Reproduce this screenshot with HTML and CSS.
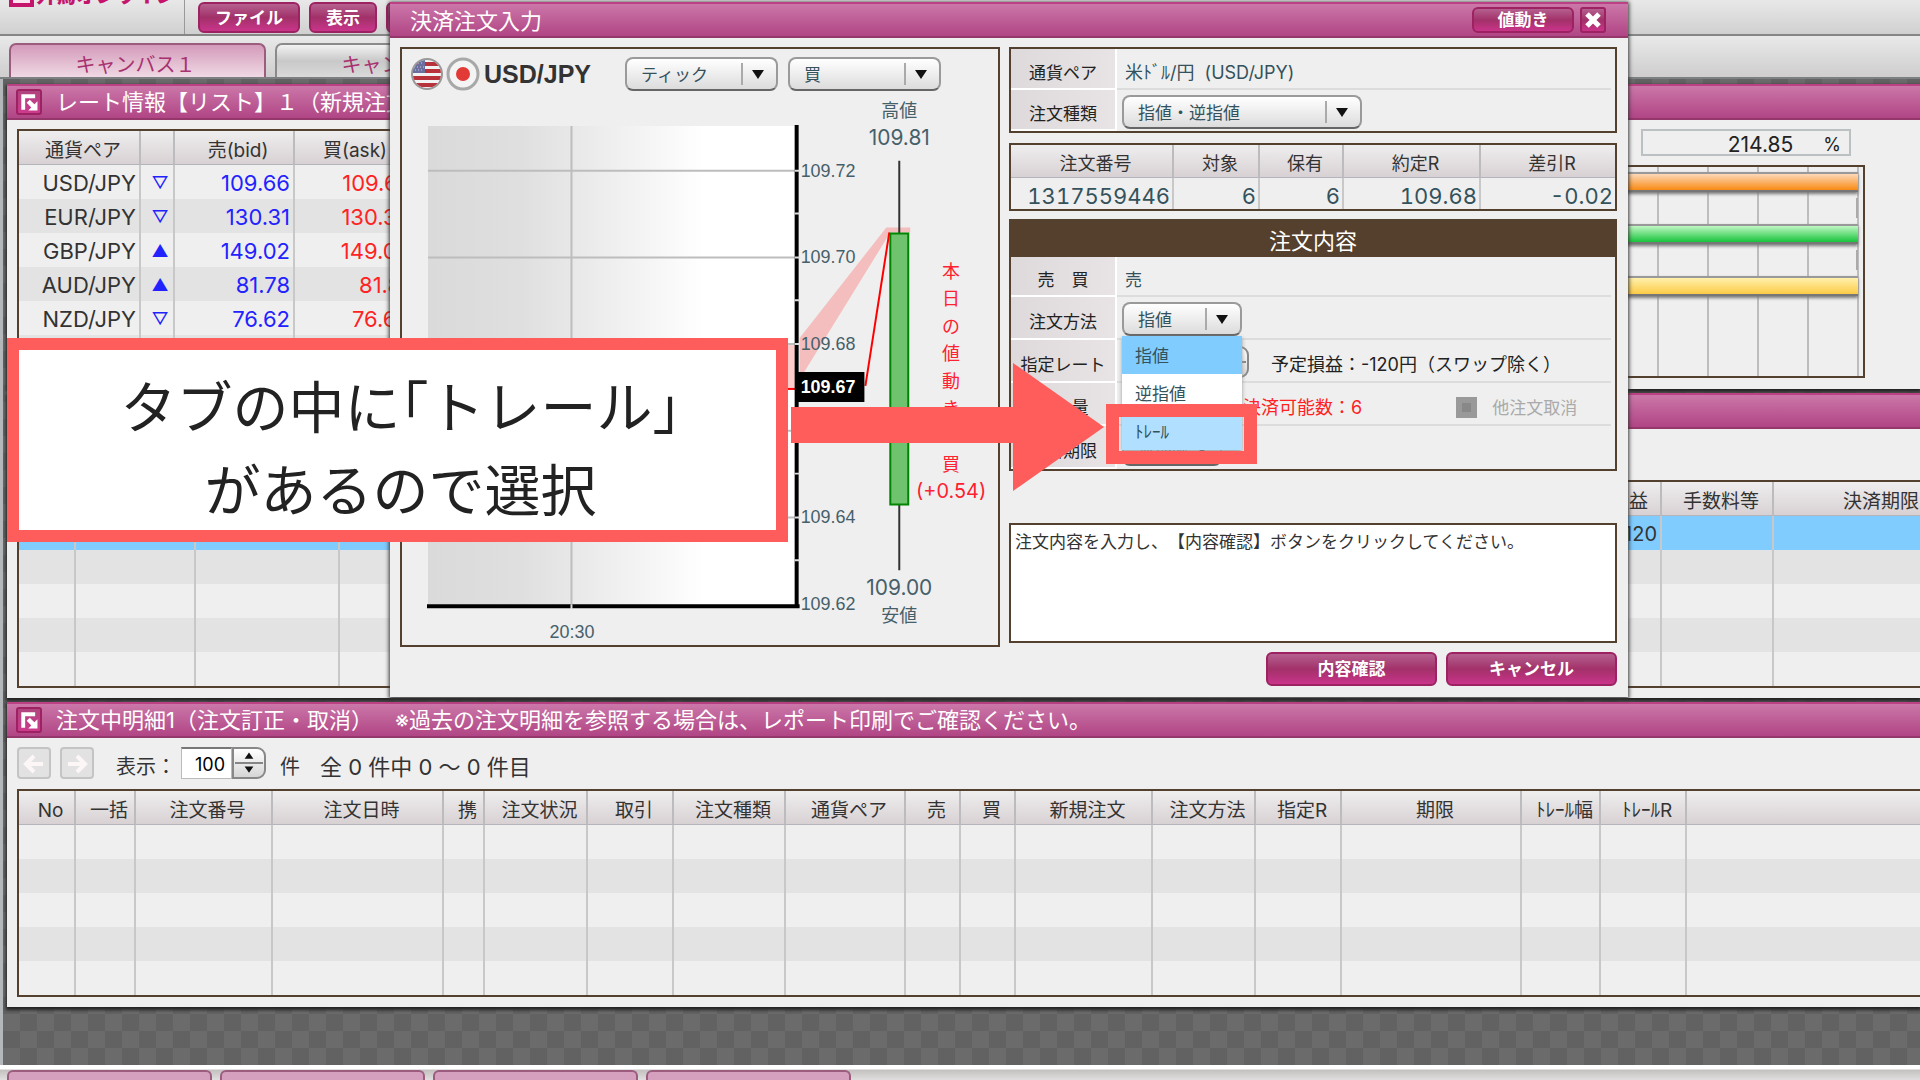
FILE: index.html
```html
<!DOCTYPE html>
<html lang="ja">
<head>
<meta charset="utf-8">
<title>決済注文入力</title>
<link rel="stylesheet" href="styles.css">
</head>
<body>
<header class="topbar">
  <div class="brand"><span class="brand-mark"></span>外為オンライン</div>
  <nav class="menu">
    <button class="btn menu-file">ファイル</button>
    <button class="btn">表示</button>
    <button class="btn" aria-label="設定"></button>
  </nav>
</header>
<nav class="canvas-tabs">
  <a class="canvas-tab active" href="#c1">キャンバス１</a>
  <a class="canvas-tab" href="#c2">キャンバス２</a>
</nav>

<main class="workspace">
  <div class="row-split">
    <section class="window">
      <h2 class="titlebar">
        <svg class="win-icon" viewBox="0 0 26 26"><path d="M3 23V3h18v5H8v15z" fill="#fff"/><path d="M24 12v12H12l4-4-6-6 4-4 6 6z" fill="#fff"/></svg>
        レート情報【リスト】１（新規注文）
      </h2>
      <div class="window-body">
        <table class="grid rates">
          <thead><tr><th>通貨ペア</th><th></th><th>売(bid)</th><th>買(ask)</th><th></th></tr></thead>
          <tbody>
            <tr><td>USD/JPY</td><td class="dir">▽</td><td class="bid">109.66</td><td class="ask">109.67</td><td></td></tr>
            <tr><td>EUR/JPY</td><td class="dir">▽</td><td class="bid">130.31</td><td class="ask">130.32</td><td></td></tr>
            <tr><td>GBP/JPY</td><td class="dir">▲</td><td class="bid">149.02</td><td class="ask">149.05</td><td></td></tr>
            <tr><td>AUD/JPY</td><td class="dir">▲</td><td class="bid">81.78</td><td class="ask">81.81</td><td></td></tr>
            <tr><td>NZD/JPY</td><td class="dir">▽</td><td class="bid">76.62</td><td class="ask">76.68</td><td></td></tr>
            <tr><td></td><td></td><td></td><td></td><td></td></tr>
          </tbody>
        </table>
      </div>
    </section>
    <section class="window">
      <div class="titlebar"></div>
      <div class="window-body account">
        <div class="ratio"><span>214.85</span><span class="percent">%</span></div>
        <div class="bars">
          <div class="bar orange"></div>
          <div class="bar-tick"></div>
          <div class="bar green"></div>
          <div class="bar-tick"></div>
          <div class="bar yellow"></div>
        </div>
      </div>
    </section>
  </div>

  <section class="window">
    <div class="titlebar"></div>
    <div class="window-body">
      <div class="toolbar"></div>
      <table class="grid positions">
        <thead><tr><th></th><th></th><th></th><th></th><th>評価損益</th><th>手数料等</th><th>決済期限</th></tr></thead>
        <tbody>
          <tr class="selected"><td></td><td></td><td></td><td></td><td>-120</td><td></td><td></td></tr>
          <tr><td></td><td></td><td></td><td></td><td></td><td></td><td></td></tr>
          <tr><td></td><td></td><td></td><td></td><td></td><td></td><td></td></tr>
          <tr><td></td><td></td><td></td><td></td><td></td><td></td><td></td></tr>
          <tr><td></td><td></td><td></td><td></td><td></td><td></td><td></td></tr>
        </tbody>
      </table>
    </div>
  </section>

  <section class="window">
    <h2 class="titlebar">
      <svg class="win-icon" viewBox="0 0 26 26"><path d="M3 23V3h18v5H8v15z" fill="#fff"/><path d="M24 12v12H12l4-4-6-6 4-4 6 6z" fill="#fff"/></svg>
      注文中明細1（注文訂正・取消）　※過去の注文明細を参照する場合は、レポート印刷でご確認ください。
    </h2>
    <div class="window-body">
      <div class="toolbar">
        <button class="page-btn" aria-label="前へ"><svg viewBox="0 0 24 24"><path d="M21 12H5M12 4l-8 8 8 8" fill="none" stroke="#fdf6f6" stroke-width="4"/></svg></button>
        <button class="page-btn" aria-label="次へ"><svg viewBox="0 0 24 24"><path d="M3 12h16M12 4l8 8-8 8" fill="none" stroke="#fdf6f6" stroke-width="4"/></svg></button>
        <label for="count">表示：</label>
        <span class="spinner"><input id="count" type="text" value="100"><button aria-label="増減"><svg viewBox="0 0 32 32"><path d="M16 4l5 7H11zM16 27l5-7H11z" fill="#111"/><path d="M0 16h32" stroke="#777" stroke-width="2"/></svg></button></span>
        <span class="unit">件</span>
        <span class="total">全 0 件中 0 ～ 0 件目</span>
      </div>
      <table class="grid orders">
        <thead><tr><th>No</th><th>一括</th><th>注文番号</th><th>注文日時</th><th>携</th><th>注文状況</th><th>取引</th><th>注文種類</th><th>通貨ペア</th><th>売</th><th>買</th><th>新規注文</th><th>注文方法</th><th>指定R</th><th>期限</th><th>ﾄﾚｰﾙ幅</th><th>ﾄﾚｰﾙR</th><th></th></tr></thead>
        <tbody>
          <tr><td></td><td></td><td></td><td></td><td></td><td></td><td></td><td></td><td></td><td></td><td></td><td></td><td></td><td></td><td></td><td></td><td></td><td></td></tr>
          <tr><td></td><td></td><td></td><td></td><td></td><td></td><td></td><td></td><td></td><td></td><td></td><td></td><td></td><td></td><td></td><td></td><td></td><td></td></tr>
          <tr><td></td><td></td><td></td><td></td><td></td><td></td><td></td><td></td><td></td><td></td><td></td><td></td><td></td><td></td><td></td><td></td><td></td><td></td></tr>
          <tr><td></td><td></td><td></td><td></td><td></td><td></td><td></td><td></td><td></td><td></td><td></td><td></td><td></td><td></td><td></td><td></td><td></td><td></td></tr>
          <tr><td></td><td></td><td></td><td></td><td></td><td></td><td></td><td></td><td></td><td></td><td></td><td></td><td></td><td></td><td></td><td></td><td></td><td></td></tr>
        </tbody>
      </table>
    </div>
  </section>
</main>
<footer class="taskbar"><i></i><i></i><i></i><i></i></footer>

<div class="dialog" role="dialog" aria-labelledby="dlg-title">
  <div class="titlebar dialog-title">
    <h1 id="dlg-title">決済注文入力</h1>
    <button class="btn move-btn">値動き</button>
    <button class="btn close-btn" aria-label="閉じる"><svg viewBox="0 0 16 16"><path d="M2 2l12 12M14 2L2 14" stroke="#fff" stroke-width="5"/></svg></button>
  </div>
  <div class="dialog-body">
    <div class="panel chart-panel">
      <div class="chart-head">
        <svg class="flags" viewBox="0 0 70 34">
          <defs><clipPath id="us"><circle cx="17" cy="17" r="14"/></clipPath></defs>
          <circle cx="17" cy="17" r="16" fill="#999"/>
          <g clip-path="url(#us)"><path fill="#f2f2f2" d="M0 0h34v34H0z"/><path d="M0 7h34M0 14h34M0 21h34M0 28h34" stroke="#b8323c" stroke-width="4"/><path fill="#6a6fa0" d="M0 0h15v16H0z"/><path d="M5 6h9M4 10h10M5 13h9" stroke="#c8cade" stroke-width="1" stroke-dasharray="1 2"/></g>
          <circle cx="53" cy="17" r="15" fill="#f4f4f4" stroke="#a8a8a8" stroke-width="3"/><circle cx="53" cy="17" r="7" fill="#e23a36"/>
        </svg>
        <strong class="pair">USD/JPY</strong>
        <select class="select w153" aria-label="足種"><option>ティック</option></select>
        <select class="select w153" aria-label="売買"><option>買</option></select>
      </div>
      <svg class="chart" viewBox="401 96 598 549">
        <defs><linearGradient id="fade"><stop offset="0" stop-color="#dadada"/><stop offset=".25" stop-color="#dfdfdf"/><stop offset=".55" stop-color="#f2f2f2"/><stop offset=".75" stop-color="#fff"/></linearGradient></defs>
        <path fill="url(#fade)" d="M427 125h370v480H427z"/>
        <path d="M427 170h370M427 257h370M427 344h370M427 431h370M427 518h370M571 125v480" stroke="#bdbdbd" stroke-width="2" fill="none"/>
        <path fill="#fcc" d="M780 345h17v43h-17z"/>
        <path d="M780 389h17" stroke="#f00" stroke-width="2"/>
        <path d="M797 124v484M426 607h374" stroke="#000" stroke-width="4"/>
        <path d="M795 170h5M795 213h5M795 257h5M795 300h5M795 344h5M795 474h5M795 518h5M795 561h5M571 605v5" stroke="#ddd" stroke-width="2"/>
        <path fill="#f4bebe" d="M887 227h24v5h-20l-87 141h-4v-35z"/>
        <path d="M890 232L866 386" stroke="#f00" stroke-width="2"/>
        <path d="M900 160v411" stroke="#333" stroke-width="2"/>
        <path d="M891 233h18v272h-18z" fill="#6fc36f" stroke="#008500" stroke-width="2"/>
        <g class="axis"><text x="801" y="176">109.72</text><text x="801" y="263">109.70</text><text x="801" y="350">109.68</text><text x="801" y="524">109.64</text><text x="801" y="611">109.62</text><text x="549" y="639">20:30</text></g>
        <path d="M796 372h69v30h-69z"/><text class="now" x="801" y="393">109.67</text>
        <g class="extreme"><text x="900" y="116">高値</text><text class="num" x="900" y="144">109.81</text><text class="num" x="900" y="596">109.00</text><text x="900" y="623">安値</text></g>
        <g class="move"><text x="952" y="278">本</text><text x="952" y="305">日</text><text x="952" y="333">の</text><text x="952" y="360">値</text><text x="952" y="388">動</text><text x="952" y="415">き</text><text x="952" y="471">買</text><text class="num" x="952" y="498">(+0.54)</text></g>
      </svg>
    </div>
    <div class="order-column">
      <div class="panel form">
        <div class="field"><span class="label">通貨ペア</span><span class="value pair-name">米ﾄﾞﾙ/円&nbsp; (USD/JPY)</span></div>
        <div class="field"><label class="label" for="kind">注文種類</label><span class="value"><select class="select w240" id="kind"><option>指値・逆指値</option></select></span></div>
      </div>
      <table class="panel grid summary">
        <thead><tr><th>注文番号</th><th>対象</th><th>保有</th><th>約定R</th><th>差引R</th></tr></thead>
        <tbody><tr><td>1317559446</td><td>6</td><td>6</td><td>109.68</td><td>-0.02</td></tr></tbody>
      </table>
      <section class="panel form content">
        <h2>注文内容</h2>
        <div class="field first"><span class="label">売　買</span><span class="value">売</span></div>
        <div class="field"><label class="label" for="method">注文方法</label><span class="value combo">
          <select class="select w120" id="method"><option>指値</option></select>
          <ul class="options"><li class="current">指値</li><li>逆指値</li><li class="hover">ﾄﾚｰﾙ</li></ul>
        </span></div>
        <div class="field"><label class="label" for="rate">指定レート</label><span class="value"><span class="spinner rate"><input id="rate" type="text"><button aria-label="レート増減"><svg viewBox="0 0 32 32"><path d="M0 16h32" stroke="#777" stroke-width="2"/></svg></button></span><span class="profit">予定損益：-120円（スワップ除く）</span></span></div>
        <div class="field"><span class="label">数　量</span><span class="value"><span class="limit">決済可能数：6</span><label class="cancel"><input type="checkbox" disabled>他注文取消</label></span></div>
        <div class="field"><label class="label" for="expiry">決済期限</label><span class="value"><select class="select w100" id="expiry"><option>無期限</option></select></span></div>
      </section>
      <p class="message">注文内容を入力し、【内容確認】ボタンをクリックしてください。</p>
      <div class="actions"><button class="btn">内容確認</button><button class="btn">キャンセル</button></div>
    </div>
  </div>
</div>

<svg class="arrow" viewBox="0 0 314 128"><path d="M0 44h222V0l91 64-91 64V80H0z" fill="#ff5c5c"/></svg>
<div class="highlight"></div>
<p class="callout">タブの中に「トレール」<br>があるので選択</p>
</body>
</html>
```
FILE: styles.css
```css
* { box-sizing: border-box; }

body {
  margin: 0;
  height: 100vh;
  display: flex;
  flex-direction: column;
  position: relative;
  overflow: hidden;
  background: #e4e4e4;
  color: #333;
  font: 18px/24px Inter, "Noto Sans CJK JP", sans-serif;
  text-spacing-trim: space-all;
}
h1, h2, p, ul { margin: 0; padding: 0; font-weight: 400; }
button, input, select { font: inherit; }

/* top menu */
.topbar {
  flex: none;
  display: flex;
  height: 36px;
  background: linear-gradient(#e8e8e8, #d0d0d0);
  border-bottom: 2px solid #868686;
}
.brand {
  flex: none;
  width: 185px;
  padding-left: 9px;
  display: flex;
  gap: 2px;
  line-height: 28px;
  margin-top: -18px;
  height: 52px;
  font-size: 20px;
  font-weight: 900;
  color: #c4146c;
  white-space: nowrap;
  overflow: hidden;
  border-right: 1px solid #999;
}
.brand-mark { width: 25px; height: 25px; border: 4px solid #c4146c; background: #fbe4ef; flex: none; }
.menu { display: flex; gap: 9px; padding: 2px 0 1px 13px; }
.btn {
  min-width: 68px;
  padding: 0;
  border: 2px solid #9c2262;
  border-radius: 6px;
  background: linear-gradient(#b5608f, #a23169 50%, #c9348a);
  color: #fff;
  font-size: 17px;
  font-weight: 700;
}
.menu-file { width: 102px; }

/* canvas tabs */
.canvas-tabs {
  flex: none;
  display: flex;
  gap: 9px;
  height: 43px;
  padding: 7px 0 0 9px;
  background: linear-gradient(#e9e9e9, #cfcdcd);
  border-bottom: 2px solid #7c8083;
}
.canvas-tab {
  width: 257px;
  padding: 8px 4px 0 0;
  border: 2px solid #8a8a8a;
  border-bottom: 0;
  border-radius: 7px 7px 0 0;
  background: linear-gradient(#f2f2f2, #c8c8c8 50%, #dadada);
  color: #a8326f;
  font-size: 20px;
  text-align: center;
  text-decoration: none;
}
.canvas-tab.active { border-color: #9b5c7e; background: linear-gradient(#d49aba, #efd9e4); }

/* workspace */
.workspace {
  flex: 1;
  min-height: 0;
  display: flex;
  flex-direction: column;
  gap: 4px;
  padding: 5px 0 0 4px;
  border-left: 3px solid #b4b8ba;
  background: repeating-conic-gradient(#6b6b6b 0 25%, #626262 0 50%) 0 0 / 34px 34px;
}
.row-split { display: grid; grid-template-columns: 820px 1fr; gap: 4px; }
.window {
  height: 305px;
  background: #efefef;
  box-shadow: 0 2px 3px 1px #222;
  overflow: hidden;
}
.titlebar {
  display: flex;
  align-items: center;
  gap: 14px;
  height: 36px;
  padding: 0 9px;
  border-top: 2px solid #bb4184;
  border-bottom: 2px solid #94386b;
  background: linear-gradient(#cb77a9, #b14585);
  color: #fff;
  font-size: 22px;
  white-space: nowrap;
}
.win-icon { width: 26px; height: 26px; padding: 1px; border: 2px solid #9c2262; border-radius: 3px; background: linear-gradient(#b0457f, #cc3a8d); flex: none; }
.window-body { padding: 9px 0 10px 10px; overflow: hidden; }
.toolbar { display: flex; align-items: center; height: 32px; margin-bottom: 10px; font-size: 20px; }
.page-btn { width: 34px; height: 32px; margin-right: 9px; padding: 3px; border: 2px solid #c4c4c4; border-radius: 4px; background: #e2e2e2; }
.page-btn svg { display: block; width: 24px; height: 24px; }
.toolbar label { margin: 0 5px 0 13px; padding-top: 8px; }
.unit { margin: 0 20px 0 14px; padding-top: 8px; }
.total { padding-top: 8px; font-size: 22px; }
.spinner { display: flex; height: 32px; }
.spinner input { width: 51px; padding: 3px 6px 0; border: 1px solid #bbb; border-top: 2px solid #777; background: #fff; text-align: right; font-size: 18px; }
.spinner button { width: 34px; padding: 0; border: 2px solid #888; border-radius: 0 9px 9px 0; background: linear-gradient(#fff, #d6d6d6); }
.spinner svg { display: block; width: 100%; height: 28px; }

/* data grids */
.grid {
  width: 100%;
  table-layout: fixed;
  border-collapse: separate;
  border-spacing: 0;
  border: 2px solid #54402e;
  border-right: 0;
  color: #333;
}
.grid th {
  height: 34px;
  padding: 6px 0 0 8px;
  font-size: 19px;
  font-weight: 400;
  white-space: nowrap;
  background: linear-gradient(#efeeee, #d8d1d4);
  border-right: 2px solid #bcbcbf;
  border-bottom: 1px solid #b4b4bc;
}
.grid td { height: 34px; padding: 2px 3px 0 0; border-right: 2px solid #c8c8c8; text-align: right; font-size: 22px; line-height: 24px; }
.grid tbody tr:nth-child(even) { background: #e3e3e3; }
.grid th:last-child, .grid td:last-child { border-right: 0; }
.grid .selected { background: #80ccff; }
.grid .dir { color: #22f; text-align: center; padding: 2px 0 0 6px; font-size: 17px; }
.grid .bid { color: #22f; }
.grid .ask { color: #f22; }
.rates th:nth-child(1) { width: 122px; }
.rates th:nth-child(2) { width: 34px; }
.rates th:nth-child(3), .rates th:nth-child(4) { width: 120px; }
.rates th:nth-child(4) { padding-left: 2px; }
.positions { width: calc(100% + 60px); }
.positions th:nth-child(1) { width: 57px; }
.positions th:nth-child(2) { width: 120px; }
.positions th:nth-child(3) { width: 144px; }
.positions th:nth-child(5) { width: 110px; }
.positions th:nth-child(6) { width: 112px; }
.positions th:nth-child(7) { width: 206px; }
.positions td { font-size: 20px; }
.orders th:nth-child(1) { width: 57px; }
.orders th:nth-child(2) { width: 60px; }
.orders th:nth-child(3) { width: 137px; }
.orders th:nth-child(4) { width: 171px; }
.orders th:nth-child(5) { width: 41px; }
.orders th:nth-child(6) { width: 103px; }
.orders th:nth-child(7) { width: 86px; }
.orders th:nth-child(8) { width: 112px; }
.orders th:nth-child(9) { width: 120px; }
.orders th:nth-child(10), .orders th:nth-child(11) { width: 55px; }
.orders th:nth-child(12) { width: 137px; }
.orders th:nth-child(13) { width: 103px; }
.orders th:nth-child(14) { width: 86px; }
.orders th:nth-child(15) { width: 180px; }
.orders th:nth-child(16) { width: 79px; }
.orders th:nth-child(17) { width: 86px; }

/* account ratio */
.account { display: flex; flex-direction: column; align-items: flex-end; padding-right: 55px; }
.ratio { display: flex; justify-content: flex-end; gap: 30px; width: 210px; height: 27px; margin-right: 14px; padding: 2px 8px 0 0; border: 2px solid #bbc0c2; color: #222; font-size: 21px; }
.percent { font-size: 18px; }
.bars {
  width: 100%;
  height: 213px;
  margin-top: 9px;
  padding: 5px 5px 0 0;
  border: 2px solid #54402e;
  background: repeating-linear-gradient(to left, transparent 0 4px, #bdbdbd 4px 6px, transparent 6px 50px);
}
.bar { height: 20px; border-top: 2px solid #999; border-bottom: 2px solid #777; box-shadow: 0 2px 3px #777; }
.orange { background: linear-gradient(#fdd9b8, #f88a14); }
.green { background: linear-gradient(#c0f7c4, #17c43c); }
.yellow { background: linear-gradient(#fff0ac, #fccb46); }
.bar-tick { width: 2px; height: 20px; margin: 6px 0 6px auto; background: #aaa; }

.taskbar { flex: none; display: flex; gap: 8px; height: 15px; padding: 5px 0 0 7px; background: linear-gradient(#fff 4px, #c4c0c0 5px, #e0dede); }
.taskbar i { width: 205px; border: 2px solid #9b5c7e; border-bottom: 0; border-radius: 6px 6px 0 0; background: #d5a0be; }

/* order dialog */
.dialog { position: absolute; left: 390px; top: 2px; width: 1238px; background: #efefef; box-shadow: 0 1px 4px 1px #333; color: #34525c; font-size: 17px; }
.dialog-title { padding: 0 22px 0 20px; gap: 6px; }
.dialog-title h1 { flex: 1; font-size: 22px; padding-top: 2px; }
.dialog-title .btn { height: 26px; line-height: 22px; }
.dialog-title .move-btn { width: 102px; }
.dialog-title .close-btn { min-width: 0; width: 26px; border-radius: 3px; }
.close-btn svg { display: block; width: 16px; height: 16px; margin: auto; }
.dialog-body { display: flex; gap: 9px; padding: 9px 11px 11px 10px; }
.panel { border: 2px solid #54402e; }
.chart-panel { width: 600px; height: 600px; }
.chart-head { display: flex; align-items: center; height: 34px; margin-top: 8px; padding-left: 8px; }
.flags { width: 70px; height: 34px; margin-right: 4px; }
.pair { width: 141px; font: 700 25px/34px "Liberation Sans", sans-serif; color: #333; }
.chart-head .select + .select { margin-left: 10px; }
.chart { display: block; width: 596px; height: 547px; margin-top: 6px; }
.chart text { fill: #46606a; }
.chart .axis text { font: 18px "Liberation Sans", sans-serif; }
.chart .now { font: 700 18px "Liberation Sans", sans-serif; fill: #fff; }
.chart .extreme text, .chart .move text { font-size: 18px; text-anchor: middle; }
.chart .extreme .num { font-size: 21px; }
.chart .move .num { font-size: 20px; }
.chart .move text { fill: #ff2030; }

.select {
  appearance: none;
  height: 34px;
  padding: 2px 36px 0 14px;
  border: 2px solid #9a9a9a;
  border-bottom-color: #666;
  border-radius: 8px;
  background: url("data:image/svg+xml,%3Csvg xmlns='http://www.w3.org/2000/svg' width='36' height='30'%3E%3Cpath d='M2 4v22' stroke='%23aaa' stroke-width='2'/%3E%3Cpath d='M12 11h12l-6 9z' fill='%23111'/%3E%3C/svg%3E") right center no-repeat, linear-gradient(#fff, #dcdcdc);
  color: #34525c;
}
.w153 { width: 153px; }
.w240 { width: 240px; }
.w120 { width: 120px; }
.w100 { width: 100px; }

.order-column { width: 608px; display: flex; flex-direction: column; }
.field { display: flex; height: 43px; }
.field.first { height: 40px; }
.form:not(.content) .field { height: 41px; }
.label { width: 106px; flex: none; display: flex; align-items: center; justify-content: center; padding-top: 8px; color: #222; background: linear-gradient(to right, #ded9da, #e8e3e4); border-right: 2px solid #fff; border-bottom: 2px solid #fff; }
.value { flex: 1; display: flex; align-items: center; padding-left: 8px; padding-top: 3px; margin-right: 4px; border-bottom: 2px solid #dcdcdc; white-space: nowrap; }
.value > .select { margin-left: -3px; }
.field:last-child .value { border-bottom: 0; }
.first .value, .value.pair-name { padding-top: 8px; }
.pair-name { font-size: 18px; }
.summary { width: 100%; height: 68px; margin: 10px 0 8px; border-right: 2px solid #54402e; }
.summary th { height: 33px; font-size: 18px; color: #333; }
.summary th:nth-child(1) { width: 163px; }
.summary th:nth-child(2) { width: 86px; }
.summary th:nth-child(3) { width: 84px; }
.summary th:nth-child(4) { width: 137px; }
.summary td { height: 31px; padding: 5px 2px 0 0; color: #34525c; font-variant-numeric: tabular-nums; }
.content h2 { height: 36px; background: #54402c; color: #fff; font-size: 22px; line-height: 40px; text-align: center; }
.combo { position: relative; }
.options { position: absolute; left: 5px; top: 39px; width: 120px; z-index: 1; list-style: none; background: #fff; box-shadow: 0 2px 4px #999; }
.options li { height: 38px; padding-left: 13px; line-height: 40px; }
.options .current { background: #80ccff; }
.options .hover { background: #b0dfff; }
.rate { margin-left: -3px; }
.rate input { width: 93px; }
.profit { margin-left: 22px; padding-top: 5px; color: #222; font-size: 18px; }
.limit { margin-left: 118px; padding-top: 5px; color: #f22; font-size: 18px; }
.cancel { display: flex; align-items: center; gap: 15px; margin-left: 94px; padding-top: 5px; color: #aaa; }
.cancel input { appearance: none; width: 21px; height: 21px; margin: 0; border: 6px solid #999; background: #888; }
.message { height: 120px; margin-top: 52px; padding: 4px; border: 2px solid #54402e; background: #fff; color: #333; line-height: 26px; }
.actions { display: flex; justify-content: flex-end; gap: 9px; margin-top: 9px; }
.actions .btn { width: 171px; height: 34px; }

/* tutorial overlay */
.arrow { position: absolute; z-index: 5; left: 791px; top: 363px; width: 314px; height: 128px; }
.highlight { position: absolute; z-index: 5; left: 1106px; top: 404px; width: 151px; height: 60px; border: 13px solid #ff5c5c; }
.callout {
  position: absolute;
  z-index: 5;
  left: 7px;
  top: 338px;
  width: 781px;
  height: 204px;
  padding: 12px 0 0 6px;
  border: 12px solid #ff5c5c;
  background: #fff;
  color: #222;
  font: 56px/83px "Noto Sans CJK JP", sans-serif;
  font-feature-settings: "halt";
  text-align: center;
}
```
